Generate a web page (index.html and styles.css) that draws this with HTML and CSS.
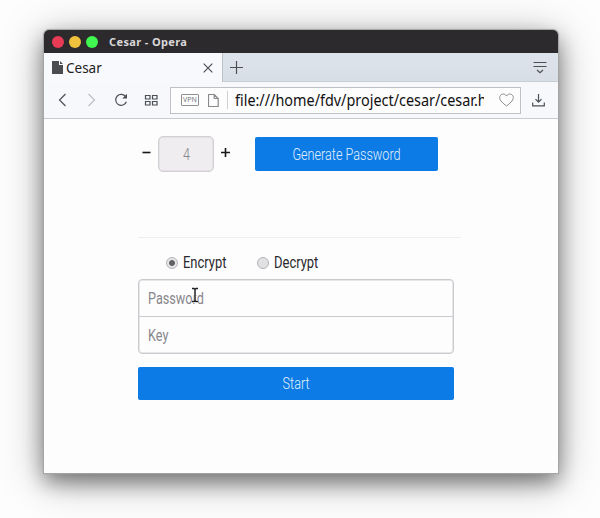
FILE: index.html
```html
<!DOCTYPE html>
<html lang="en">
<head>
<meta charset="utf-8">
<title>Cesar</title>
<link rel="stylesheet" href="styles.css">
</head>
<body>
<div class="window">
  <header class="titlebar"><i class="dot red"></i><i class="dot yellow"></i><i class="dot green"></i><span class="title">Cesar - Opera</span></header>
  <nav class="tabs">
    <div class="tab">
      <svg class="tab-icon" width="11" height="13" viewBox="0 0 11 13"><path fill="#4b4c50" d="M0 0h7v4h4v9H0zM8 0l3 3H8z"/></svg>
      <span class="tab-name">Cesar</span>
      <svg class="close" width="10" height="10" viewBox="0 0 10 10"><path d="M.7.7l8.6 8.6M9.3.7L.7 9.3"/></svg>
    </div>
    <svg class="plus" width="13" height="13" viewBox="0 0 13 13"><path d="M6.5 0v13M0 6.5h13"/></svg>
    <svg class="menu" width="14" height="13" viewBox="0 0 14 13"><path d="M.5 1.5h13M.5 5.500h13M4 9l3 2.700L10 9"/></svg>
  </nav>
  <div class="toolbar">
    <svg class="tools" width="126" height="36" viewBox="0 0 126 36">
      <path d="M21.500 12l-6 6 6 6"/><path class="dim" d="M44.500 12l6 6-6 6"/>
      <path d="M81.800 14.800A5.500 5.500 0 1 0 82.400 19.700"/><path class="tip" d="M83 11.800v4.700h-4.700z"/>
      <path d="M101.500 13.500h4.500v3.500h-4.500zM108.500 13.500h4.500v3.500h-4.500zM101.500 19.500h4.500v3.500h-4.500zM108.500 19.500h4.500v3.500h-4.500z"/>
    </svg>
    <div class="address">
      <span class="vpn">VPN</span>
      <svg class="page" width="11" height="13" viewBox="0 0 11 13"><path d="M.5.5h5.700l4 4v8H.5zM6.200.5v4h4"/></svg>
      <i class="divider"></i>
      <span class="url"><span>file:///home/fdv/project/cesar/cesar.h</span></span>
      <svg class="heart" width="15" height="14" viewBox="0 0 15 14"><path d="M7.500 13C4 10.300.7 7.700.7 4.500.7 1.200 5.300-.6 7.500 3 9.700-.6 14.300 1.200 14.300 4.500c0 3.200-3.300 5.800-6.800 8.500z"/></svg>
    </div>
    <svg class="download" width="13" height="13" viewBox="0 0 13 13"><path d="M6.500 0v8M3.500 5.200l3 3 3-3M.7 8.500v3.300h11.600V8.500"/></svg>
  </div>
  <main class="content">
    <div class="generator">
      <svg class="sign" width="9" height="9" viewBox="0 0 9 9"><path d="M.5 4.500h8"/></svg>
      <div class="count"><span>4</span></div>
      <svg class="sign" width="9" height="9" viewBox="0 0 9 9"><path d="M0 4.500h9M4.500 0v9"/></svg>
      <button class="generate"><span>Generate Password</span></button>
    </div>
    <hr>
    <div class="modes">
      <div class="mode"><i class="radio on"></i><span>Encrypt</span></div>
      <div class="mode"><i class="radio"></i><span>Decrypt</span></div>
    </div>
    <div class="fields">
      <div class="field"><span>Password</span>
        <svg class="cursor" width="8" height="16" viewBox="0 0 8 16"><path class="halo" d="M1 1.500h2l1 1 1-1h2M4 2.500v11M1 14.500h2l1-1 1 1h2"/><path d="M1 1.500h2l1 1 1-1h2M4 2.500v11M1 14.500h2l1-1 1 1h2"/></svg>
      </div>
      <div class="field"><span>Key</span></div>
    </div>
    <button class="start"><span>Start</span></button>
  </main>
</div>
</body>
</html>
```
FILE: styles.css
```css
* { box-sizing: border-box; }
body { margin: 0; height: 518px; overflow: hidden; padding: 30px 42px 45px 44px; background: #fefdfe; font-family: Roboto, "Liberation Sans", sans-serif; }
svg { flex: none; fill: none; stroke: #4c4f55; stroke-width: 1.2; }
.window { width: 514px; height: 443px; background: #fefdfe; border-radius: 5px 5px 0 0; box-shadow: 0 0 1px 1px #a5a3a6, 0 9px 20px rgba(0,0,0,.4), 0 7px 42px rgba(0,0,0,.34); }
.titlebar { height: 23px; background: #2c2a2c; border-radius: 5px 5px 0 0; display: flex; align-items: center; padding-left: 8px; }
.dot { width: 12px; height: 12px; border-radius: 50%; margin-right: 5px; }
.red { background: #e83b55; }
.yellow { background: #efc13c; }
.green { background: #40f650; }
.title { margin-left: 6px; color: #dad8da; font: bold 11px "Noto Sans", sans-serif; letter-spacing: .38px; }
.tabs { height: 29px; display: flex; align-items: center; background: linear-gradient(#dee4eb, #d7dee6); border-bottom: 1px solid #c9ced5; }
.tab { width: 179px; height: 29px; margin-bottom: -1px; display: flex; align-items: center; padding-left: 8px; background: #f8f9fc; border-right: 1px solid #b9c1c9; }
.tab-icon { stroke: none; }
.tab-name { flex: 1; margin-left: 3px; font: 13.5px "Noto Sans", sans-serif; color: #222; }
.close { margin-right: 9px; }
.plus { margin-left: 7px; }
.menu { margin: 0 11px 0 auto; }
.toolbar { height: 37px; display: flex; align-items: center; background: #f6f8fb; border-bottom: 1px solid #c9cacd; }
.dim { stroke: #bbbec3; }
.tip { fill: #4c4f55; stroke: none; }
.address { width: 351px; height: 27px; border: 1px solid #bfc0c3; background: #fdfdfe; display: flex; align-items: center; padding-left: 10px; }
.vpn { width: 18px; height: 12px; border: 1px solid #8e9094; border-radius: 1px; color: #77797d; font: 7px/10px "Noto Sans", sans-serif; text-align: center; }
.page { margin-left: 9px; stroke: #88898c; }
.divider { width: 1px; height: 18px; background: #d0d1d4; margin: 0 7px 0 8px; }
.url { width: 249px; overflow: hidden; color: #111; font: 16px/22px "Noto Sans", sans-serif; white-space: nowrap; }
.url span { display: inline-block; transform: scaleX(.9); transform-origin: left; }
.heart { margin-left: 15px; stroke: #898a8e; stroke-width: 1; }
.download { margin-left: 11px; }
.content { padding: 17px 97px 0 94px; font-size: 16px; color: #222; }
.generator { display: flex; align-items: center; height: 36px; padding-left: 4px; }
.sign { stroke: #171819; stroke-width: 1.6; margin-bottom: 3px; }
.count { width: 56px; height: 36px; margin: 0 7px; border: 1.500px solid #d2d0d4; border-radius: 5px; background: #efedf0; color: #85858a; display: flex; align-items: center; justify-content: center; box-shadow: inset 0 0 0 .5px #d8d6da; }
button { border: 0; border-radius: 2px; background: #0c7be5; color: #e1f0fb; font: 16px Roboto, sans-serif; padding: 0; white-space: nowrap; display: flex; align-items: center; justify-content: center; }
.generate { width: 183px; height: 34px; margin-left: 25px; }
.content span { display: inline-block; transform: scaleX(.79); font-weight: 300; }
hr { margin: 65px 0 0; height: 1px; border: 0; background: #eeedf0; }
.modes { display: flex; height: 41px; padding: 8px 0 0 28px; }
.mode { width: 91px; display: flex; align-items: center; }
.radio { width: 12px; height: 12px; border: 1px solid #b3b2b5; border-radius: 50%; background: #e1e0e3; margin-right: 5px; }
.on { background: radial-gradient(circle, #626265 0 2.500px, #e6e5e8 3.400px); }
.content .mode span { transform: scaleX(.81); transform-origin: left; font-weight: 400; color: #29292b; }
.fields { width: 316px; height: 75px; border: 1px solid #cccace; border-radius: 4px; box-shadow: inset 0 0 0 1px #e6e5e8; }
.field { position: relative; height: 36px; padding-left: 9px; display: flex; align-items: center; color: #77767b; }
.field:first-child { border-bottom: 1px solid #cccace; height: 37px; }
.field span { transform-origin: left; }
.content .field span { font-weight: 400; color: #87868b; }
.cursor { position: absolute; left: 52px; top: 7px; stroke: #202022; stroke-width: 1.500; }
.halo { stroke: #fff; stroke-width: 3; }
.start { width: 316px; height: 33px; margin-top: 13px; }
```
